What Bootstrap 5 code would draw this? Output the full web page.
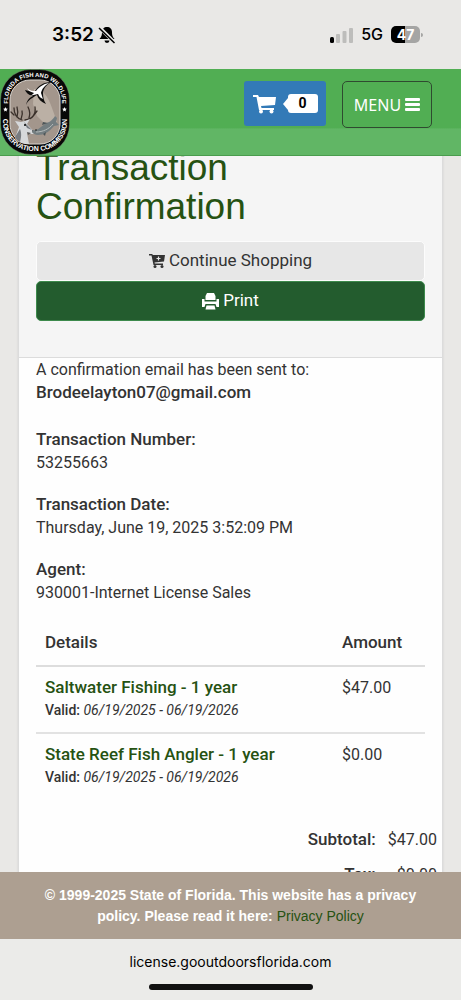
<!DOCTYPE html>
<html lang="en">
<head>
<meta charset="utf-8">
<meta name="viewport" content="width=device-width, initial-scale=1">
<title>Transaction Confirmation</title>
<link href="https://cdn.jsdelivr.net/npm/bootstrap@5.3.0/dist/css/bootstrap.min.css" rel="stylesheet">
<style>
  body { font-family: Roboto, sans-serif; font-size: 16px; line-height: 23px; color: #333; background: #e9e8e6; }
  .status-bar { padding: 0 38px 0 52px; height: 69px; color: #000; font-family: Inter, sans-serif; }
  .clock { font-size: 19px; font-weight: 600; }
  .network { font-size: 16px; font-weight: 500; }
  .battery { width: 29px; height: 17px; border-radius: 5px; background: linear-gradient(90deg, #000 48%, #a5a5a4 48%); color: #fff; font-size: 14px; font-weight: 700; line-height: 17px; }
  .battery-tip { width: 2px; height: 4px; margin-left: 1px; border-radius: 0 2px 2px 0; background: #a5a5a4; }
  .site-header { height: 87px; padding: 0 29px 0 0; background: linear-gradient(#51ae53 0 68%, #61b665 70% 100%); border-bottom: 1px solid #4a9c4d; z-index: 2; }
  .cart-btn, .cart-btn:hover { width: 82px; height: 45px; background: #337ab7; border-radius: 3px; }
  .cart-count { width: 30px; height: 19px; border-radius: 3px; background: #fff; color: #000; font-size: 14px; line-height: 19px; position: relative; }
  .cart-count::before { content: ""; position: absolute; right: 100%; top: 4px; border: solid transparent; border-width: 6px 5px 6px 0; border-right-color: #fff; }
  .menu-btn, .menu-btn:hover { width: 90px; height: 47px; border: 1px solid #2f4a30; border-radius: 5px; color: #fff; font: 16px "Noto Sans", sans-serif; }
  main { min-height: 0; }
  .receipt { margin: -8px 18px 0; border: 1px solid #dcdcdc; border-width: 0 1px; border-radius: 0; background: #fefefe; color: #333; box-shadow: 0 0 2px #d0d0d0; }
  .receipt-top { padding: 0 17px 36px; background: #f5f5f5; border-bottom: 1px solid #dcdcdc; }
  h1 { font: 37px/39px "Liberation Sans", Arial, sans-serif; color: #265212; margin: 0 0 15px; }
  .action { height: 40px; padding: 0; font-size: 17px; border-radius: 5px; }
  .action-light, .action-light:hover { background: #e7e7e7; border: 1px solid #fcfcfc; color: #333; }
  .action-print, .action-print:hover { background: #235c2e; border: 1px solid #3d8a4c; color: #fff; }
  .receipt-body { padding: 0 17px; }
  .receipt-body dl { margin: 0; }
  .receipt-body dt, .receipt-body th, .email { font-size: 17px; font-weight: 500; }
  .receipt-body dd { margin: 0 0 19px; }
  .email-note { margin: 0 0 24px; }
  .items { margin: 0; color: #333; --bs-table-bg: transparent; --bs-table-color: #333; }
  .items th { padding: 8px 9px 11px; border-bottom: 2px solid #ddd; }
  .items td { padding: 9px 9px 10px; border-bottom: 2px solid #e2e2e2; }
  .items tr:last-child td { border: 0; }
  .items .amount { width: 92px; }
  .item-link { color: #265212; font-size: 17px; font-weight: 500; text-decoration: none; }
  .validity { font-size: 14px; font-weight: 500; line-height: 23px; }
  .validity em { font-weight: 400; }
  .totals { margin: 29px -12px 0 auto; text-align: right; }
  .totals th, .totals td { padding: 0 0 12px 12px; }
  .site-footer { background: #ad9f91; color: #fff; font: bold 14px/21px "Liberation Sans", Arial, sans-serif; padding: 13px 36px 12px; z-index: 2; }
  .site-footer a { color: #265212; font-weight: 400; text-decoration: none; }
  .browser-bar { height: 61px; padding: 11px 0 10px; color: #000; font: 14px/23px Inter, sans-serif; background: #ebebe9; }
  .home-bar { width: 164px; height: 6px; border-radius: 3px; background: #111; }
</style>
</head>
<body class="vh-100 d-flex flex-column overflow-hidden">
  <div class="status-bar d-flex align-items-center justify-content-between flex-shrink-0">
    <div class="d-flex align-items-center gap-1">
      <span class="clock">3:52</span>
      <svg width="18" height="18" viewBox="0 0 18 18" aria-label="Silent">
        <path d="M9 1c-3 0-5 2-5 5 0 4-1 5-2.500 7h15C15 11 14 10 14 6c0-3-2-5-5-5zM6.500 14.500h5a2.500 2.500 0 0 1-5 0z" fill="#000"/>
        <path d="M1.500 1.500l15 15" stroke="#e9e8e6" stroke-width="3.500"/><path d="M1 2l15.500 15" stroke="#000" stroke-width="1.500"/>
      </svg>
    </div>
    <div class="d-flex align-items-center">
      <svg class="me-2" width="23" height="16" viewBox="0 0 23 16" aria-label="Signal"><rect y="10" width="4" height="6" rx="1.500"/><g fill="#bdbdbb"><rect x="6" y="7" width="4" height="9" rx="1"/><rect x="12.500" y="4" width="4" height="12" rx="1"/><rect x="19" y="1" width="4" height="15" rx="1"/></g></svg>
      <span class="network me-2">5G</span>
      <span class="battery text-center">47</span><span class="battery-tip"></span>
    </div>
  </div>

  <header class="site-header d-flex justify-content-between position-relative flex-shrink-0">
    <a href="#" aria-label="Florida Fish and Wildlife Conservation Commission">
      <svg class="d-block" width="70" height="86" viewBox="0 0 70 86">
        <rect x=".5" y=".5" width="69" height="85" rx="30" fill="#080808" stroke="#7a9a76" stroke-width=".5"/>
        <rect x="10" y="11" width="50" height="64" rx="20" fill="#a3968c" stroke="#d8d2cc" stroke-width="1"/>
        <path d="M34 20c9 0 14 7 18 19l5 14-12 2-8-8-4-12z" fill="#bbb0a5"/>
        <path d="M26 36c1-5 4-8 7-9-5-1-7-4-8-6 4 1 6 2 10 1 3-5 8-9 17-9-5 2-8 6-9 10 0 6 1 9 3 12-5-2-8-5-9-9-5 3-9 5-11 10z" fill="#0c0c0c"/>
        <path d="M27 19c3 3 6 3 9 3 3-4 7-7 13-8-5 3-7 6-8 10l2 6c-3-1-4-3-5-5-3 1-6 1-8 2 2-1 3-2 4-3-4-1-6-3-7-5z" fill="#fff"/>
        <g fill="none" stroke="#3a302a" stroke-width="1.300" stroke-linecap="round"><path d="M22 51c-6-2-8-6-8-12M14 46l-3-3M17 48c1-4 1-7 0-10M25 51c8-1 11-6 10-13M29 49c1-3 1-7-1-11M34 46l3-4M21 50c1-3 2-5 1-8"/></g>
        <path d="M15 52l6 1 4-1 5-2-3 5c3 3 5 6 8 8-1 3-5 2-8 1l2 11c-7 0-12-2-14-6l4-11z" fill="#d6d8da"/>
        <path d="M20 60c2 5 1 9 0 13-3-1-4-3-5-5zM24 53l4 4 4 4-5-2z" fill="#777b80"/>
        <circle cx="25" cy="56" r="1"/><path d="M32 61l3 2-2 1z"/><path d="M27 63l4 1-3 2z" fill="#555"/>
        <path d="M33 61c4 1 8-3 12-6 4-2 7-3 10-8l2 2-1 4 3 3-5 1c-5 6-10 9-16 9-3 0-5-2-6-3z" fill="#737d80"/>
        <path d="M36 63c7 0 13-3 17-8" fill="none" stroke="#b4baba" stroke-width="1"/><path d="M42 56l1-3 5 1zM43 65l2 2 1-4z" fill="#4c5558"/><circle cx="36" cy="61" r=".7"/>
        <path id="ring-top" d="M8 37V31A24 24 0 0 1 32 8H38A24 24 0 0 1 62 31V37" fill="none"/>
        <path id="ring-bottom" d="M3 44V53A29 29 0 0 0 32 82H38A29 29 0 0 0 67 53V44" fill="none"/>
        <g fill="#fff" font-family="Liberation Sans, Arial, sans-serif" font-weight="700" text-anchor="middle">
          <text font-size="6"><textPath href="#ring-top" startOffset="50%">FLORIDA FISH AND WILDLIFE</textPath></text>
          <text font-size="7"><textPath href="#ring-bottom" startOffset="50%">CONSERVATION COMMISSION</textPath></text>
        </g>
        <path d="M5.500 38l.7 1.500 1.600.2-1.200 1.200.3 1.600-1.400-.8-1.400.8.3-1.600-1.200-1.200 1.600-.2zM64.500 38l.7 1.500 1.600.2-1.200 1.200.3 1.600-1.400-.8-1.400.8.3-1.600-1.200-1.200 1.600-.2z" fill="#fff"/>
      </svg>
    </a>
    <div class="d-flex align-items-start pt-2 gap-3">
      <button type="button" class="cart-btn btn border-0 p-0 mt-1 d-flex align-items-center justify-content-center gap-2" aria-label="Cart, 0 items">
        <svg width="23" height="20" viewBox="0 0 23 20" fill="#fff"><path d="M0 1h5l1 2h17l-1 8-14 1 .5 2H21v2H6L3.500 3H0z"/><circle cx="8" cy="17.500" r="2"/><circle cx="18.500" cy="17.500" r="2"/></svg>
        <span class="cart-count ms-1 fw-bold">0</span>
      </button>
      <button type="button" class="menu-btn btn p-0 mt-1 d-flex align-items-center justify-content-center gap-1">MENU<svg width="15" height="13" viewBox="0 0 15 13" fill="#fff"><rect width="15" height="3" rx="1"/><rect y="5" width="15" height="3" rx="1"/><rect y="10" width="15" height="3" rx="1"/></svg></button>
    </div>
  </header>

  <main class="flex-fill overflow-hidden">
    <section class="receipt card">
      <div class="receipt-top">
        <h1>Transaction<br>Confirmation</h1>
        <button type="button" class="action action-light btn w-100 d-flex align-items-center justify-content-center gap-1">
          <svg width="16" height="14" viewBox="0 0 16 14" fill="#333"><path d="M0 0h3l1 1h12l-1 6.500-9.500 1 .3 1H14v1.500H4.500L2.500 1.500H0z"/><circle cx="6" cy="12.500" r="1.500"/><circle cx="13" cy="12.500" r="1.500"/><path d="M9.500 2.500v4M7.500 4.500h4" stroke="#e7e7e7" stroke-width="1.200"/></svg>
          Continue Shopping</button>
        <button type="button" class="action action-print btn w-100 d-flex align-items-center justify-content-center gap-1">
          <svg width="17" height="17" viewBox="0 0 17 17" fill="#fff"><path d="M5 0h7l1.500 3v4h-10V3zM0 6h2.500v2.500h12V6H17v8h-2.500l-1-3h-10l-1 3H0zM4.500 12.500h8l1 4h-10z"/></svg>
          Print</button>
      </div>
      <div class="receipt-body">
        <p class="email-note">A confirmation email has been sent to:<br><span class="email">Brodeelayton07@gmail.com</span></p>
        <dl>
          <dt>Transaction Number:</dt><dd>53255663</dd>
          <dt>Transaction Date:</dt><dd>Thursday, June 19, 2025 3:52:09 PM</dd>
          <dt>Agent:</dt><dd>930001-Internet License Sales</dd>
        </dl>
        <table class="items table">
          <thead><tr><th scope="col">Details</th><th scope="col" class="amount">Amount</th></tr></thead>
          <tbody>
            <tr><td><a class="item-link" href="#">Saltwater Fishing - 1 year</a><div class="validity">Valid: <em>06/19/2025 - 06/19/2026</em></div></td><td>$47.00</td></tr>
            <tr><td><a class="item-link" href="#">State Reef Fish Angler - 1 year</a><div class="validity">Valid: <em>06/19/2025 - 06/19/2026</em></div></td><td>$0.00</td></tr>
          </tbody>
        </table>
        <table class="totals">
          <tbody><tr><th scope="row">Subtotal:</th><td>$47.00</td></tr><tr><th scope="row">Tax:</th><td>$0.00</td></tr></tbody>
        </table>
      </div>
    </section>
  </main>

  <footer class="site-footer text-center position-relative flex-shrink-0">© 1999-2025 State of Florida. This website has a privacy policy. Please read it here: <a href="#">Privacy Policy</a></footer>
  <div class="browser-bar d-flex flex-column align-items-center justify-content-between flex-shrink-0">
    <span>license.gooutdoorsflorida.com</span>
    <div class="home-bar"></div>
  </div>
<script src="https://cdn.jsdelivr.net/npm/bootstrap@5.3.0/dist/js/bootstrap.bundle.min.js"></script>
</body>
</html>
